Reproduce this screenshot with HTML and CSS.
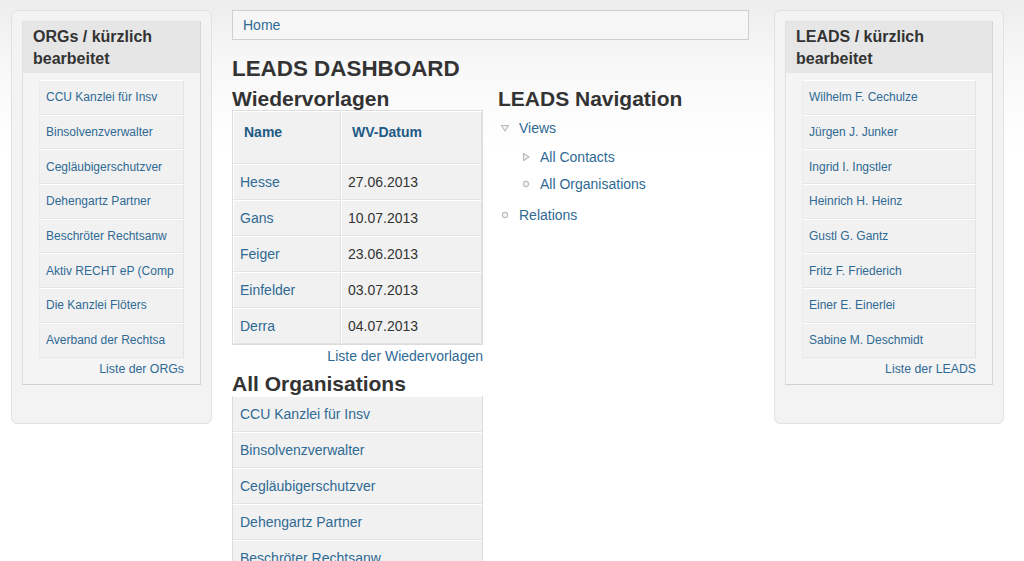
FILE: index.html
```html
<!DOCTYPE html>
<html lang="de">
<head>
<meta charset="utf-8">
<title>LEADS Dashboard</title>
<link rel="stylesheet" href="styles.css">
</head>
<body>
<div class="page">
  <aside class="side side-left">
    <div class="box">
      <h3 class="box-title">ORGs / kürzlich bearbeitet</h3>
      <ul class="box-list">
        <li><a href="#">CCU Kanzlei für Insv</a></li>
        <li><a href="#">Binsolvenzverwalter</a></li>
        <li><a href="#">Cegläubigerschutzver</a></li>
        <li><a href="#">Dehengartz Partner</a></li>
        <li><a href="#">Beschröter Rechtsanw</a></li>
        <li><a href="#">Aktiv RECHT eP (Comp</a></li>
        <li><a href="#">Die Kanzlei Flöters</a></li>
        <li><a href="#">Averband der Rechtsa</a></li>
      </ul>
      <div class="box-more"><a href="#">Liste der ORGs</a></div>
    </div>
  </aside>

  <main class="main">
    <div class="breadcrumb"><a href="#">Home</a></div>
    <h1 class="page-title">LEADS DASHBOARD</h1>
    <div class="cols">
      <section class="col-left">
        <h2 class="sec-title">Wiedervorlagen</h2>
        <table class="wv">
          <thead>
            <tr><th class="c1">Name</th><th class="c2">WV-Datum</th></tr>
          </thead>
          <tbody>
            <tr><td><a href="#">Hesse</a></td><td>27.06.2013</td></tr>
            <tr><td><a href="#">Gans</a></td><td>10.07.2013</td></tr>
            <tr><td><a href="#">Feiger</a></td><td>23.06.2013</td></tr>
            <tr><td><a href="#">Einfelder</a></td><td>03.07.2013</td></tr>
            <tr><td><a href="#">Derra</a></td><td>04.07.2013</td></tr>
          </tbody>
        </table>
        <div class="more"><a href="#">Liste der Wiedervorlagen</a></div>
        <h2 class="sec-title sec-orgs">All Organisations</h2>
        <ul class="org-list">
          <li><a href="#">CCU Kanzlei für Insv</a></li>
          <li><a href="#">Binsolvenzverwalter</a></li>
          <li><a href="#">Cegläubigerschutzver</a></li>
          <li><a href="#">Dehengartz Partner</a></li>
          <li><a href="#">Beschröter Rechtsanw</a></li>
        </ul>
      </section>
      <section class="col-right">
        <h2 class="sec-title">LEADS Navigation</h2>
        <ul class="tree">
          <li class="node">
            <div class="row row-views"><svg class="ico" width="10" height="10" viewBox="0 0 10 10"><path d="M1.5 2.5 H8.5 L5 8 Z" fill="#f4f4f4" stroke="#b8b8b8" stroke-width="1.1" stroke-linejoin="round"/></svg><a href="#">Views</a></div>
            <ul class="tree sub">
              <li class="node"><div class="row row-contacts"><svg class="ico" width="10" height="10" viewBox="0 0 10 10"><path d="M2.5 1.5 V8.5 L8 5 Z" fill="#f4f4f4" stroke="#b8b8b8" stroke-width="1.1" stroke-linejoin="round"/></svg><a href="#">All Contacts</a></div></li>
              <li class="node"><div class="row row-orgs"><svg class="ico" width="10" height="10" viewBox="0 0 10 10"><circle cx="5" cy="5" r="2.6" fill="#f4f4f4" stroke="#bdbdbd" stroke-width="1.1"/></svg><a href="#">All Organisations</a></div></li>
            </ul>
          </li>
          <li class="node"><div class="row row-rel"><svg class="ico" width="10" height="10" viewBox="0 0 10 10"><circle cx="5" cy="5" r="2.6" fill="#f4f4f4" stroke="#bdbdbd" stroke-width="1.1"/></svg><a href="#">Relations</a></div></li>
        </ul>
      </section>
    </div>
  </main>

  <aside class="side side-right">
    <div class="box">
      <h3 class="box-title">LEADS / kürzlich bearbeitet</h3>
      <ul class="box-list">
        <li><a href="#">Wilhelm F. Cechulze</a></li>
        <li><a href="#">Jürgen J. Junker</a></li>
        <li><a href="#">Ingrid I. Ingstler</a></li>
        <li><a href="#">Heinrich H. Heinz</a></li>
        <li><a href="#">Gustl G. Gantz</a></li>
        <li><a href="#">Fritz F. Friederich</a></li>
        <li><a href="#">Einer E. Einerlei</a></li>
        <li><a href="#">Sabine M. Deschmidt</a></li>
      </ul>
      <div class="box-more"><a href="#">Liste der LEADS</a></div>
    </div>
  </aside>
</div>
</body>
</html>
```

FILE: styles.css
```css
html, body {
  margin: 0;
  padding: 0;
}
body {
  font-family: "Liberation Sans", Arial, Helvetica, sans-serif;
  color: #333;
  background: #fff linear-gradient(to bottom, #ededed 0, #f7f7f7 60px, #fff 150px) no-repeat;
  height: 561px;
  overflow: hidden;
}
a {
  color: #2f6a94;
  text-decoration: none;
}
ul {
  list-style: none;
  margin: 0;
  padding: 0;
}
.page {
  display: flex;
  align-items: flex-start;
  padding: 10px 0 0 11px;
}

/* side panels */
.side {
  box-sizing: border-box;
  background: #f3f3f3;
  border: 1px solid #e2e2e2;
  border-radius: 6px;
  padding: 10px 10px 38px 10px;
}
.side-left { width: 201px; }
.side-right { width: 230px; margin-left: 25px; }
.box {
  background: #f4f4f4;
  border: 1px solid #e0e0e0;
  border-right-color: #d6d6d6;
  border-bottom-color: #d0d0d0;
  padding-bottom: 7px;
}
.box-title {
  margin: 0;
  background: #e6e6e6;
  font-size: 16px;
  line-height: 22px;
  font-weight: bold;
  color: #333;
  padding: 4px 10px 3px 10px;
}
.box-list {
  margin: 7px 16px 0 16px;
}
.box-list li {
  box-sizing: border-box;
  height: 34.7px;
  display: flex;
  align-items: center;
  padding-left: 6px;
  font-size: 12px;
  background: #f1f1f1;
  border: 1px solid #fff;
  border-left-color: #ebebeb;
  border-right-color: #e3e3e3;
  border-bottom-color: #e6e6e6;
}
.box-more {
  text-align: right;
  margin-right: 16px;
  font-size: 12.3px;
  line-height: 16px;
  margin-top: 3px;
}

/* main column */
.main {
  width: 517px;
  margin-left: 20px;
}
.breadcrumb {
  box-sizing: border-box;
  height: 30px;
  border: 1px solid #cfcfcf;
  background: #f6f6f6;
  padding: 0 10px;
  font-size: 14px;
  line-height: 29px;
}
.page-title {
  margin: 16px 0 0 0;
  font-size: 22.4px;
  line-height: 26px;
  font-weight: bold;
  color: #333;
}
.cols {
  display: flex;
  align-items: flex-start;
}
.col-left { width: 251px; }
.col-right { margin-left: 15px; }
.sec-title {
  margin: 6px 0 0 0;
  font-size: 21px;
  line-height: 22px;
  font-weight: bold;
  color: #333;
}
.sec-title.sec-orgs {
  margin-top: 9px;
}

/* table */
.wv {
  width: 251px;
  border-collapse: separate;
  border-spacing: 0;
  border: 1px solid #dcdcdc;
  font-size: 14px;
}
.wv th, .wv td {
  background: #f1f1f1;
  border: 1px solid #fff;
  border-right-color: #e2e2e2;
  border-bottom-color: #e4e4e4;
  text-align: left;
  box-sizing: border-box;
}
.wv th {
  height: 53px;
  vertical-align: top;
  padding: 11px 0 0 10px;
  color: #1d5a85;
  font-weight: bold;
  line-height: 18px;
}
.wv th.c1 { width: 108px; }
.wv td {
  height: 36px;
  padding: 0 6px;
  line-height: 18px;
}
.more {
  text-align: right;
  font-size: 14px;
  line-height: 16px;
  margin-top: 3px;
}
.org-list {
  margin-top: 1px;
  border-left: 1px solid #dcdcdc;
  border-right: 1px solid #dcdcdc;
}
.org-list li {
  box-sizing: border-box;
  height: 36px;
  display: flex;
  align-items: center;
  padding-left: 7px;
  font-size: 14px;
  background: #f1f1f1;
  border-top: 1px solid #fff;
  border-bottom: 1px solid #e4e4e4;
}

/* navigation tree */
.tree {
  font-size: 14px;
}
.row {
  display: flex;
  align-items: center;
  line-height: 20px;
}
.ico {
  flex: none;
  margin-right: 9px;
  margin-left: 2px;
}
.row-views { margin-top: 8px; }
.sub { padding-left: 21px; }
.row-contacts { margin-top: 9px; }
.row-orgs { margin-top: 7px; }
.row-rel { margin-top: 11px; }
```
